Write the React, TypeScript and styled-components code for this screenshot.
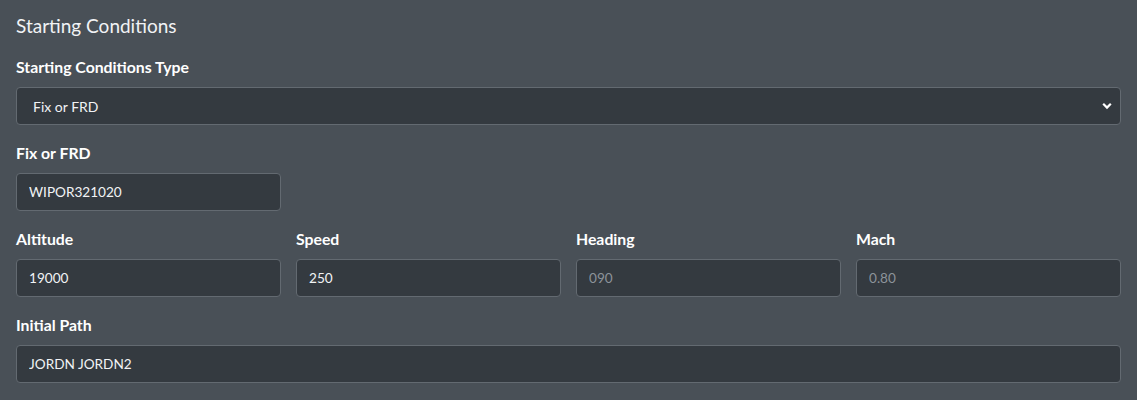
import React from "react";
import styled, { createGlobalStyle } from "styled-components";

const Global = createGlobalStyle`
  html, body { margin: 0; padding: 0; background: #495057; }
  body { font-family: "Lato", "Open Sans", sans-serif; color: #fff; }
  * { box-sizing: border-box; }
`;

const Page = styled.div`
  padding: 14px 16px 0 16px;
  width: 1137px;
  height: 400px;
  background: #495057;
`;

const Title = styled.h2`
  margin: 0 0 17px 0;
  font-size: 19px;
  font-weight: 400;
  line-height: 24px;
  color: #f1f3f5;
`;

const Group = styled.div`
  margin-bottom: 16px;
`;

const Row = styled.div`
  display: grid;
  grid-template-columns: repeat(4, 265px);
  column-gap: 15px;
`;

const Label = styled.label`
  display: block;
  font-size: 15.8px;
  font-weight: 700;
  line-height: 24px;
  margin-bottom: 8px;
  color: #fff;
`;

const Input = styled.input<{ $w?: number }>`
  display: block;
  width: ${(p) => (p.$w ? `${p.$w}px` : "100%")};
  height: 38px;
  padding: 0 12px;
  background: #343a40;
  border: 1px solid #636a71;
  border-radius: 4px;
  color: #f1f3f5;
  font-family: inherit;
  font-size: 13.6px;
  outline: none;
  &::placeholder { color: #8c939a; }
`;

const SelectWrap = styled.div`
  position: relative;
`;

const Select = styled.select`
  display: block;
  width: 100%;
  height: 38px;
  padding: 0 16px;
  appearance: none;
  background: #343a40;
  border: 1px solid #636a71;
  border-radius: 4px;
  color: #f1f3f5;
  font-family: inherit;
  font-size: 14px;
  outline: none;
`;

const Chevron = styled.svg`
  position: absolute;
  right: 9px;
  top: 15px;
  width: 10px;
  height: 8px;
  pointer-events: none;
`;

export default function App() {
  return (
    <>
      <Global />
      <Page>
        <Title>Starting Conditions</Title>
        <Group>
          <Label>Starting Conditions Type</Label>
          <SelectWrap>
            <Select defaultValue="fix">
              <option value="fix">Fix or FRD</option>
            </Select>
            <Chevron viewBox="0 0 10 8">
              <path d="M1.2 1.8 L5 5.6 L8.8 1.8" fill="none" stroke="#fff" strokeWidth="2.2" />
            </Chevron>
          </SelectWrap>
        </Group>
        <Group>
          <Label>Fix or FRD</Label>
          <Input $w={265} defaultValue="WIPOR321020" />
        </Group>
        <Group>
          <Row>
            <div>
              <Label>Altitude</Label>
              <Input defaultValue="19000" />
            </div>
            <div>
              <Label>Speed</Label>
              <Input defaultValue="250" />
            </div>
            <div>
              <Label>Heading</Label>
              <Input placeholder="090" />
            </div>
            <div>
              <Label>Mach</Label>
              <Input placeholder="0.80" />
            </div>
          </Row>
        </Group>
        <Group>
          <Label>Initial Path</Label>
          <Input defaultValue="JORDN JORDN2" />
        </Group>
      </Page>
    </>
  );
}
